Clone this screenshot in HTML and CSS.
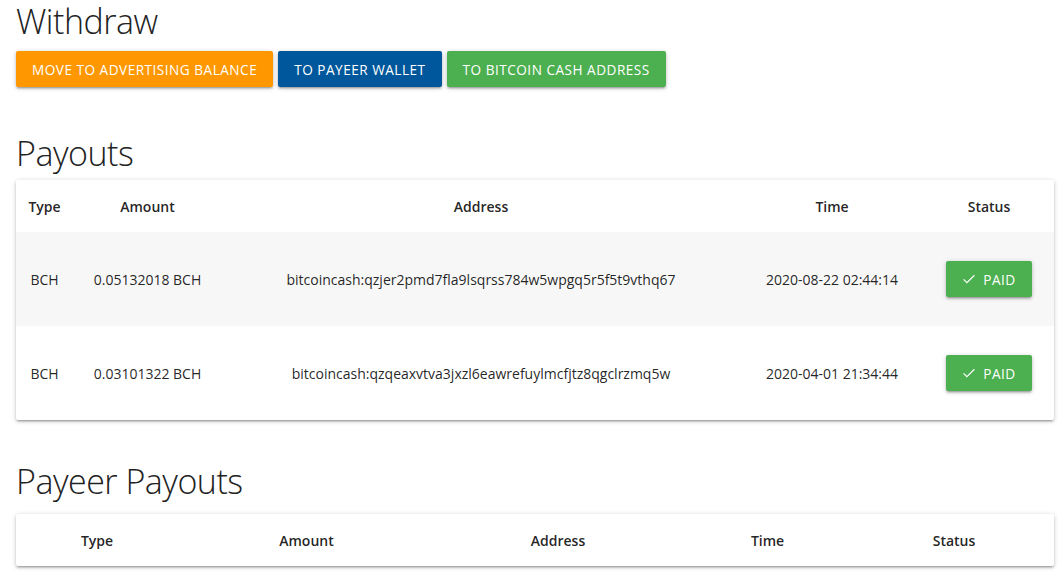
FILE: index.html
```html
<!DOCTYPE html>
<html lang="en">
<head>
  <meta charset="UTF-8" />
  <title>Withdraw</title>
  <link rel="stylesheet" href="styles.css">
</head>
<body>

  <h4 class="title first">Withdraw</h4>
  <div class="actions">
    <a class="btn orange">Move to advertising balance</a>
    <a class="btn blue">To Payeer wallet</a>
    <a class="btn green">To Bitcoin Cash address</a>
  </div>

  <h4 class="title">Payouts</h4>
  <div class="card">
    <table class="payouts">
      <colgroup>
        <col style="width:57px">
        <col style="width:149px">
        <col style="width:518px">
        <col style="width:184px">
        <col style="width:130px">
      </colgroup>
      <thead>
        <tr><th>Type</th><th>Amount</th><th>Address</th><th>Time</th><th>Status</th></tr>
      </thead>
      <tbody>
        <tr class="odd">
          <td>BCH</td>
          <td>0.05132018 BCH</td>
          <td>bitcoincash:qzjer2pmd7fla9lsqrss784w5wpgq5r5f5t9vthq67</td>
          <td>2020-08-22 02:44:14</td>
          <td><a class="btn green paid"><svg viewBox="0 0 16 12" width="14" height="10"><path d="M1.5 6.5 L5.5 10.5 L14.5 1.5" fill="none" stroke="#fff" stroke-width="1.4"/></svg>Paid</a></td>
        </tr>
        <tr>
          <td>BCH</td>
          <td>0.03101322 BCH</td>
          <td>bitcoincash:qzqeaxvtva3jxzl6eawrefuylmcfjtz8qgclrzmq5w</td>
          <td>2020-04-01 21:34:44</td>
          <td><a class="btn green paid"><svg viewBox="0 0 16 12" width="14" height="10"><path d="M1.5 6.5 L5.5 10.5 L14.5 1.5" fill="none" stroke="#fff" stroke-width="1.4"/></svg>Paid</a></td>
        </tr>
      </tbody>
    </table>
  </div>

  <h4 class="title last">Payeer Payouts</h4>
  <div class="card">
    <table class="payeer">
      <colgroup>
        <col style="width:162px">
        <col style="width:257px">
        <col style="width:246px">
        <col style="width:173px">
        <col style="width:200px">
      </colgroup>
      <thead>
        <tr><th>Type</th><th>Amount</th><th>Address</th><th>Time</th><th>Status</th></tr>
      </thead>
      <tbody></tbody>
    </table>
  </div>

</body>
</html>
```

FILE: styles.css
```css
* { box-sizing: border-box; }
body {
  font-family: 'Open Sans', 'Noto Sans', sans-serif;
  color: rgba(0,0,0,0.87);
  background: #fff;
  margin: 0;
  padding: 2px 8px 20px 16px;
  font-size: 14px;
}

.title {
  font-size: 34px;
  font-weight: 300;
  line-height: 40px;
  margin: 41px 0 7px 0;
  color: #222;
  letter-spacing: -0.5px;
}
.title.first { margin-top: 0; margin-bottom: 11px; line-height: 38px; }
.title.last { margin-bottom: 13px; }

.actions {
  display: flex;
  gap: 5px;
  margin-bottom: 46px;
}

.btn {
  display: inline-flex;
  align-items: center;
  height: 36px;
  padding: 0 16px;
  color: #fff;
  font-size: 13.6px;
  text-transform: uppercase;
  letter-spacing: .5px;
  border-radius: 2px;
  box-shadow: 0 2px 2px 0 rgba(0,0,0,.14), 0 3px 1px -2px rgba(0,0,0,.12), 0 1px 5px 0 rgba(0,0,0,.2);
  cursor: pointer;
  white-space: nowrap;
}
.orange { background: #ff9800; }
.blue { background: #01579b; }
.green { background: #4caf50; }

.paid svg { margin-right: 7px; }

.card {
  background: #fff;
  border-radius: 2px;
  box-shadow: 0 2px 2px 0 rgba(0,0,0,.14), 0 3px 1px -2px rgba(0,0,0,.12), 0 1px 5px 0 rgba(0,0,0,.2);
}

table {
  width: 100%;
  border-collapse: collapse;
  table-layout: fixed;
}

th, td {
  padding: 15px 5px;
  text-align: center;
}
th {
  font-weight: 600;
  font-size: 14px;
  height: 52px;
}
td {
  height: 94px;
  font-size: 14px;
}
tr.odd { background: #f7f7f7; }
```
